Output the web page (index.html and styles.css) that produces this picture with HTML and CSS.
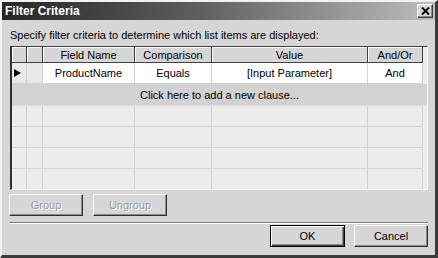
FILE: index.html
```html
<!DOCTYPE html>
<html>
<head>
<meta charset="utf-8">
<link rel="stylesheet" href="styles.css">
</head>
<body>
<div class="window">
  <div class="titlebar">
    <span class="title">Filter Criteria</span>
    <span class="close"><svg width="9" height="8" viewBox="0 0 9 8"><path d="M1 0.5 L8 7.5 M8 0.5 L1 7.5" stroke="#000" stroke-width="2" fill="none"/></svg></span>
  </div>
  <div class="body">
    <p class="desc">Specify filter criteria to determine which list items are displayed:</p>
    <div class="grid">
      <div class="row head">
        <div class="cell"></div>
        <div class="cell"></div>
        <div class="cell">Field Name</div>
        <div class="cell">Comparison</div>
        <div class="cell">Value</div>
        <div class="cell">And/Or</div>
        <div class="blank"></div>
      </div>
      <div class="row data">
        <div class="cell rh"><svg class="arrow" width="7" height="8" viewBox="0 0 7 8"><polygon points="0,0 7,4 0,8" fill="#000"/></svg></div>
        <div class="cell rh"></div>
        <div class="cell">ProductName</div>
        <div class="cell">Equals</div>
        <div class="cell">[Input Parameter]</div>
        <div class="cell">And</div>
        <div class="blank"></div>
      </div>
      <div class="add">Click here to add a new clause...</div>
      <div class="row empty"><div class="cell"></div><div class="cell"></div><div class="cell"></div><div class="cell"></div><div class="cell"></div><div class="cell"></div><div class="blank"></div></div>
      <div class="row empty"><div class="cell"></div><div class="cell"></div><div class="cell"></div><div class="cell"></div><div class="cell"></div><div class="cell"></div><div class="blank"></div></div>
      <div class="row empty"><div class="cell"></div><div class="cell"></div><div class="cell"></div><div class="cell"></div><div class="cell"></div><div class="cell"></div><div class="blank"></div></div>
      <div class="row empty"><div class="cell"></div><div class="cell"></div><div class="cell"></div><div class="cell"></div><div class="cell"></div><div class="cell"></div><div class="blank"></div></div>
    </div>
    <div class="group-btns">
      <button class="btn" disabled>Group</button>
      <button class="btn" disabled>Ungroup</button>
    </div>
    <div class="sep"></div>
    <div class="actions">
      <button class="btn default">OK</button>
      <button class="btn">Cancel</button>
    </div>
  </div>
</div>
</body>
</html>
```

FILE: styles.css
```css
html, body {
  margin: 0;
  padding: 0;
  background: #d6d6d6;
}
.window {
  width: 438px;
  height: 258px;
  box-sizing: border-box;
  background: #d6d6d6;
  border-style: solid;
  border-width: 2px 3px 3px 2px;
  border-color: #f2f2f2 #3a3a3a #3a3a3a #f2f2f2;
  font-family: "Liberation Sans", Arial, sans-serif;
  font-size: 11px;
  color: #000;
  display: flex;
  flex-direction: column;
}
.titlebar {
  height: 18px;
  display: flex;
  align-items: center;
  justify-content: space-between;
  background: linear-gradient(to right, #262626 0%, #5e5e5e 45%, #bdbdbd 100%);
  padding: 0 2px 0 3px;
}
.title {
  color: #fff;
  font-weight: bold;
  font-size: 12px;
}
.close {
  width: 16px;
  height: 14px;
  box-sizing: border-box;
  background: #d6d6d6;
  border-style: solid;
  border-width: 1px;
  border-color: #fff #404040 #404040 #fff;
  box-shadow: inset -1px -1px #888;
  display: flex;
  align-items: center;
  justify-content: center;
}
.body {
  flex: 1;
  padding: 0 7px 0 7px;
  display: flex;
  flex-direction: column;
}
.desc {
  margin: 0;
  height: 26px;
  box-sizing: border-box;
  padding: 9px 0 0 1px;
  line-height: 13px;
  white-space: nowrap;
}
.grid {
  margin-left: 1px;
  height: 144px;
  box-sizing: border-box;
  border-style: solid;
  border-width: 1px 1px 1px 2px;
  border-color: #404040 #fff #fff #303030;
  background: #ececec;
  overflow: hidden;
}
.row {
  display: grid;
  grid-template-columns: 15px 16px 92px 77px 156px 55px 1fr;
}
.cell {
  box-sizing: border-box;
  border-right: 1px solid #d2d2d2;
  border-bottom: 1px solid #d2d2d2;
  display: flex;
  align-items: center;
  justify-content: center;
  white-space: nowrap;
}
.head {
  height: 16px;
}
.head .cell {
  background: #d6d6d6;
  border-right: 1px solid #404040;
  border-bottom: 1px solid #404040;
  box-shadow: inset 1px 1px #fff;
}
.head .blank {
  background: #ececec;
}
.data {
  height: 21px;
}
.data .cell {
  background: #fff;
}
.data .cell.rh {
  background: #e8e8e8;
  justify-content: flex-start;
}
.arrow {
  margin-left: 2px;
}
.add {
  height: 22px;
  box-sizing: border-box;
  background: #d2d2d2;
  border-bottom: 1px solid #dcdcdc;
  display: flex;
  align-items: center;
  justify-content: center;
}
.empty {
  height: 21px;
}
.empty .cell {
  background: #ececec;
}
.group-btns {
  display: flex;
  gap: 10px;
  margin-top: 4px;
}
.btn {
  width: 74px;
  height: 22px;
  box-sizing: border-box;
  margin: 0;
  padding: 0;
  font-family: "Liberation Sans", Arial, sans-serif;
  font-size: 11px;
  color: #000;
  background: #d6d6d6;
  border-style: solid;
  border-width: 1px;
  border-color: #fff #303030 #303030 #fff;
  box-shadow: inset -1px -1px #8a8a8a;
}
.btn:disabled {
  color: #9a9a9a;
  text-shadow: 1px 1px #fff;
}
.sep {
  margin-top: 6px;
  height: 1px;
  border-top: 1px solid #808080;
  border-bottom: 1px solid #fff;
  height: 0;
}
.actions {
  display: flex;
  justify-content: flex-end;
  gap: 9px;
  margin-top: 1px;
}
.btn.default {
  width: 75px;
  border: 1px solid #000;
  box-shadow: inset 1px 1px #fff, inset -1px -1px #404040, inset -2px -2px #8a8a8a;
}
```
